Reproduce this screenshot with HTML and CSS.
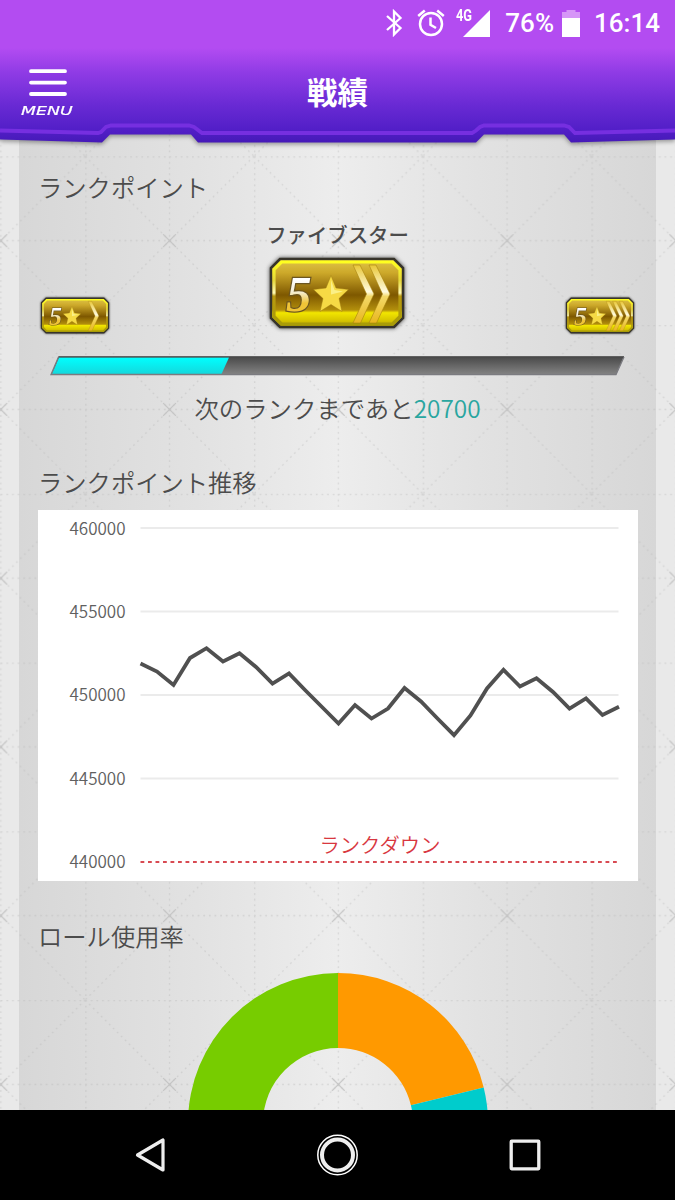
FILE: index.html
```html
<!DOCTYPE html>
<html lang="ja">
<head>
  <meta charset="UTF-8">
  <title>戦績</title>
  <meta name="viewport" content="width=device-width, initial-scale=1.0">
  <link rel="stylesheet" href="styles.css">
</head>
<body>

<!-- Shared badge artwork -->
<svg class="defs" width="0" height="0" aria-hidden="true">
  <defs>
    <linearGradient id="gold" x1="0" y1="0" x2="0" y2="1">
      <stop offset="0" stop-color="#e0c64a"/>
      <stop offset="0.2" stop-color="#cda92a"/>
      <stop offset="0.53" stop-color="#7e5800"/>
      <stop offset="0.75" stop-color="#b38f0c"/>
      <stop offset="0.79" stop-color="#f2e600"/>
      <stop offset="0.9" stop-color="#d8c600"/>
      <stop offset="1" stop-color="#b5a000"/>
    </linearGradient>
    <linearGradient id="rim" x1="0" y1="0" x2="0" y2="1">
      <stop offset="0" stop-color="#ffff20"/>
      <stop offset="0.3" stop-color="#e5d83c"/>
      <stop offset="0.5" stop-color="#fffbb5"/>
      <stop offset="0.55" stop-color="#b99a10"/>
      <stop offset="1" stop-color="#a99c08"/>
    </linearGradient>
    <linearGradient id="shine" gradientUnits="userSpaceOnUse" x1="0" y1="6" x2="0" y2="64">
      <stop offset="0" stop-color="#e8c531"/>
      <stop offset="0.48" stop-color="#fffbe0"/>
      <stop offset="0.56" stop-color="#f3d868"/>
      <stop offset="1" stop-color="#e9b820"/>
    </linearGradient>
    <linearGradient id="five" gradientUnits="userSpaceOnUse" x1="0" y1="18" x2="0" y2="54">
      <stop offset="0.1" stop-color="#ffffff"/>
      <stop offset="0.45" stop-color="#f5eed2"/>
      <stop offset="0.75" stop-color="#f0c437"/>
    </linearGradient>
    <g id="badge">
      <path class="badge-body" d="M10 1H124L133 10V60L124 69H10L1 60V10Z" fill="url(#gold)"/>
      <path d="M11.500 4H122.500L130 11.500V58.500L122.500 66H11.500L4 58.500V11.500Z" fill="none" stroke="url(#rim)" stroke-width="3.200"/>
      <text class="badge-number" x="16" y="53" fill="url(#five)">5</text>
      <path d="M61 17.500L66 30L78.500 31.500L69 40.500L72 53.500L61 46.500L50 53.500L53 40.500L43.500 31.500L56 30Z" fill="#f6da45" stroke="#a07c10" stroke-opacity="0.600" stroke-width="0.800" stroke-linejoin="round"/>
      <path d="M61 22L64.500 32L73 33.500L61 36.500Z" fill="#fbf087"/>
    </g>
    <path id="chevron" d="M0 7H7L21 36L7.500 65H0L13.500 36Z" fill="url(#shine)" stroke="#a8830f" stroke-width="0.600"/>
    <pattern id="mesh" width="168.750" height="168.750" patternUnits="userSpaceOnUse" patternTransform="translate(85.200 22.300)">
      <g fill="none" stroke="#b4b4b4" stroke-width="1.300" stroke-dasharray="1.800 3.823" opacity="0.380">
        <path d="M0 84.375H168.750M84.375 0V168.750M0 0.700H168.750M0.700 0V168.750M0 0L168.750 168.750M168.750 0L0 168.750"/>
      </g>
      <path d="M78 78L90.700 90.700M90.700 78L78 90.700" stroke="#c2c2c2" stroke-width="1.200"/>
    </pattern>
  </defs>
</svg>

<div class="screen">

<header class="header">
  <svg class="header-bg" width="675" height="152" viewBox="0 0 675 152">
    <defs>
      <linearGradient id="purple" gradientUnits="userSpaceOnUse" x1="0" y1="48" x2="0" y2="143">
        <stop offset="0" stop-color="#b34cf1"/>
        <stop offset="0.260" stop-color="#8f3be5"/>
        <stop offset="0.600" stop-color="#692ad4"/>
        <stop offset="0.850" stop-color="#531fc8"/>
        <stop offset="1" stop-color="#4519b7"/>
      </linearGradient>
    </defs>
    <path class="header-shape" d="M0 0H675V139.500L571 142.500L564 134.500H484L476 142.500H198L191 134.500H110L102 142.500L0 139.500Z" fill="url(#purple)"/>
    <path d="M0 130.500L98 133L101 132L106 127L111 125.500H189L194 127L202 133H472L476 130.500L480 127L484 125.500H564L569 127L575 133L675 130.500" fill="none" stroke="#762fe0" stroke-width="3.800"/>
  </svg>

  <div class="status-bar">
    <svg class="icon-bluetooth" width="18" height="28" viewBox="0 0 18 28">
      <path d="M2 7L15.500 19L9 25.500V2.500L15.500 9L2 21" fill="none" stroke="#fff" stroke-width="2.300"/>
    </svg>
    <svg class="icon-alarm" width="28" height="28" viewBox="0 0 28 28" fill="none" stroke="#fff" stroke-width="2.500">
      <circle cx="14" cy="15" r="11"/>
      <path d="M1.200 7L7.800 1.500M20.200 1.500L26.800 7M13.500 8.500V15.800L19 19"/>
    </svg>
    <div class="signal">
      <span class="signal-label">4G</span>
      <svg width="28" height="28" viewBox="0 0 28 28"><path d="M28 1V28H1Z" fill="#fff"/></svg>
    </div>
    <span class="battery-text">76%</span>
    <svg class="icon-battery" width="18" height="28" viewBox="0 0 18 28">
      <path d="M4.500 1H13.500V3H18V9H0V3H4.500Z" fill="#d696f7"/>
      <path d="M0 9H18V28H0Z" fill="#fff"/>
    </svg>
    <span class="clock">16:14</span>
  </div>

  <div class="title-bar">
    <div class="menu">
      <svg width="38" height="28" viewBox="0 0 38 28"><path d="M2 2.200H36M2 13.600H36M2 25H36" stroke="#fff" stroke-width="3.800" stroke-linecap="round"/></svg>
      <span class="menu-label">MENU</span>
    </div>
    <h1>戦績</h1>
  </div>
</header>

<main class="content">
  <svg class="mesh" width="675" height="976"><rect width="675" height="976" fill="url(#mesh)"/></svg>

  <div class="panel">
    <h2>ランクポイント</h2>

    <div class="rank">
      <svg class="badge-small" viewBox="0 0 134 70">
        <use href="#badge"/><use href="#chevron" x="93"/>
      </svg>
      <div class="rank-current">
        <p class="rank-name">ファイブスター</p>
        <svg class="badge-large" viewBox="0 0 134 70">
          <use href="#badge"/><use href="#chevron" x="83"/><use href="#chevron" x="99"/>
        </svg>
      </div>
      <svg class="badge-small" viewBox="0 0 134 70">
        <use href="#badge"/><use href="#chevron" x="79"/><use href="#chevron" x="92"/><use href="#chevron" x="105"/>
      </svg>
    </div>

    <svg class="progress" width="576" height="20" viewBox="0 0 576 20">
      <defs>
        <linearGradient id="track" x1="0" y1="0" x2="0" y2="1">
          <stop offset="0" stop-color="#484848"/><stop offset="1" stop-color="#858585"/>
        </linearGradient>
        <linearGradient id="fill" x1="0" y1="0" x2="0" y2="1">
          <stop offset="0" stop-color="#00ffff"/><stop offset="1" stop-color="#14d8dc"/>
        </linearGradient>
      </defs>
      <path d="M8.500 0.500H574L566 19H1Z" fill="url(#track)"/>
      <path d="M9 1.500H179L171.500 18H2Z" fill="url(#fill)"/>
      <path d="M574 1L566 18.500H1L8.500 1" fill="none" stroke="#7b7b80" stroke-width="1.300"/>
      <path d="M8.500 0.800H574" stroke="#4b4b4b"/>
    </svg>
    <p class="next-rank">次のランクまであと<span class="points">20700</span></p>

    <h2 class="history-title">ランクポイント推移</h2>
    <svg class="chart" width="600" height="371" viewBox="0 0 600 371">
      <g class="grid">
        <path d="M102.500 18H580.500M102.500 101.500H580.500M102.500 185H580.500M102.500 268.500H580.500"/>
      </g>
      <g class="axis">
        <text x="87.500" y="24.500">460000</text>
        <text x="87.500" y="107.800">455000</text>
        <text x="87.500" y="191.200">450000</text>
        <text x="87.500" y="274.500">445000</text>
        <text x="87.500" y="358">440000</text>
      </g>
      <path class="down-line" d="M102.500 352H580.500"/>
      <text class="down-label" x="342" y="342.500">ランクダウン</text>
      <polyline class="line" points="102.500,153.500 119,161.500 135.500,175 152,148 168.500,138.200 185,151.500 201.500,143.200 218,157 234.500,173.500 251,163.500 267.500,180.500 284,197 300.500,213.500 317,195 333.500,208.500 350,198.500 366.500,178 383,191.500 399.500,208.500 416,225.200 432.500,205.500 449,178.500 465.500,159.800 482,176.500 498.500,168.200 515,182 531.500,198.500 548,188.500 564.500,205 581,196.700"/>
    </svg>

    <h2 class="role-title">ロール使用率</h2>
    <svg class="donut" width="300" height="300" viewBox="0 0 300 300">
      <path d="M150 0A150 150 0 0 1 295.700 114.400L222.900 132.200A75 75 0 0 0 150 75Z" fill="#ff9900"/>
      <path d="M295.700 114.400A150 150 0 0 1 150 300V225A75 75 0 0 0 222.900 132.200Z" fill="#00cccc"/>
      <path d="M150 300A150 150 0 0 1 150 0V75A75 75 0 0 0 150 225Z" fill="#77cc00"/>
    </svg>
  </div>
</main>

<nav class="nav-bar">
  <svg width="40" height="44" viewBox="0 0 40 44"><path d="M6.500 22L32 7V37Z" fill="none" stroke="#eee" stroke-width="3.200" stroke-linejoin="round"/></svg>
  <svg width="44" height="44" viewBox="0 0 44 44" fill="none" stroke="#eee">
    <circle cx="21.500" cy="22" r="19.700" stroke="#fff" stroke-width="1.500"/>
    <circle cx="21.500" cy="22" r="15.500" stroke-width="4"/>
  </svg>
  <svg width="40" height="44" viewBox="0 0 40 44"><rect x="6.200" y="8.200" width="27.600" height="27.600" rx="0.500" fill="none" stroke="#eee" stroke-width="3.300" stroke-linejoin="round"/></svg>
</nav>

</div>
</body>
</html>
```
FILE: styles.css
```css
* {
  box-sizing: border-box;
}
body {
  margin: 0;
  font-family: "Noto Sans CJK JP", sans-serif;
  font-weight: 350; /* DemiLight */
  color: #4c4c4c;
  background: #e9e9e9;
}
h1, h2, p {
  margin: 0;
}
svg {
  display: block;
  flex: none;
}
.defs {
  position: absolute;
}
.screen {
  width: 675px;
  height: 1200px;
  display: flex;
  flex-direction: column;
  overflow: hidden;
}

/* Header */
.header {
  position: relative;
  z-index: 1;
  height: 134px;
  flex: none;
  color: #fff;
}
.header-bg {
  position: absolute; /* notched edge hangs over the content */
  top: 0;
  left: 0;
  z-index: -1;
}
.header-shape {
  filter: drop-shadow(0 2px 2px rgba(0,0,0,0.35));
}
.status-bar {
  height: 48px;
  padding: 0 15px 2px 0;
  display: flex;
  justify-content: flex-end;
  align-items: center;
  font-family: Roboto, sans-serif;
  font-size: 26px;
  font-weight: 500;
}
.icon-alarm {
  margin-left: 14px;
}
.signal {
  display: flex;
  align-items: flex-start;
  margin-left: 10px;
}
.signal-label {
  width: 17px;
  margin: 0 -11px 0 1px;
  font-size: 16px;
  font-weight: 700;
  line-height: 14px;
  transform: scaleX(0.8);
  transform-origin: left;
}
.battery-text {
  margin-left: 15px;
}
.icon-battery {
  margin-left: 8px;
}
.clock {
  margin-left: 14px;
}
.title-bar {
  height: 86px;
  display: grid;
  grid-template-columns: 96px 1fr 96px;
}
.menu {
  padding-top: 21px;
  display: flex;
  flex-direction: column;
  align-items: center;
}
.menu-label {
  margin-top: 7px;
  margin-right: 2px;
  font: italic 12px/14px "DejaVu Sans", sans-serif;
  -webkit-text-stroke: 0.2px #fff;
  transform: scaleX(1.45);
}
h1 {
  padding-top: 21px;
  font-size: 30.4px;
  line-height: 44px;
  text-align: center;
}

/* Content */
.content {
  position: relative;
  flex: 1;
  min-height: 0;
  overflow: hidden;
  padding: 0 19px;
}
.mesh {
  position: absolute; /* dotted texture over the panel colour */
  top: 0;
  left: 0;
}
.panel {
  height: 1100px;
  padding: 35px 19px 0;
  background: linear-gradient(to right, #d7d7d7, #e2e2e2 28%, #ededed 50%, #e2e2e2 72%, #d7d7d7);
}
.panel > * {
  position: relative;
}
h2 {
  font-size: 24.3px;
  font-weight: 350;
  line-height: 36px;
}
.rank {
  height: 129px;
  padding: 0 3px;
  display: flex;
  justify-content: space-between;
  align-items: flex-end;
}
.rank-current {
  height: 112px;
}
.rank-name {
  font-size: 20.4px;
  font-weight: 500;
  line-height: 24px;
  text-align: center;
}
.badge-body {
  stroke: #37342b;
  stroke-width: 2.6px;
}
.badge-small {
  width: 68px;
  height: 37px;
  overflow: visible;
  filter: drop-shadow(0 0 1px rgba(0,0,0,0.7));
}
.badge-large {
  width: 134px;
  height: 70px;
  margin: 12px auto 0;
  overflow: visible;
  filter: drop-shadow(0 0 2px rgba(0,0,0,0.7));
}
.badge-number {
  font: italic bold 51px "Liberation Serif", serif;
  stroke: #6c5620;
  stroke-width: 2.4px;
  paint-order: stroke;
}
.progress {
  margin: 22px 0 0 12px;
}
.next-rank {
  margin-top: 14px;
  font-size: 24.4px;
  line-height: 36px;
  text-align: center;
}
.points {
  color: #2aa6a0;
}

/* Rank point history */
.history-title {
  margin-top: 38px;
}
.chart {
  margin: 10px 0 0 -0.5px;
  background: #fff;
}
.grid {
  stroke: #ebebeb;
  stroke-width: 2px;
}
.axis {
  fill: #606060;
  font-size: 17px;
  text-anchor: end;
}
.line {
  fill: none;
  stroke: #505050;
  stroke-width: 3.8px;
}
.down-line {
  stroke: #d84a52;
  stroke-width: 2px;
  stroke-dasharray: 3.8 3.7;
}
.down-label {
  fill: #d8373f;
  font-size: 20.3px;
  text-anchor: middle;
}

/* Role usage */
.role-title {
  margin-top: 37px;
}
.donut {
  margin: 19px auto 0;
}

/* Android navigation */
.nav-bar {
  height: 90px;
  flex: none;
  display: flex;
  justify-content: center;
  align-items: center;
  gap: 145px;
  background: #000;
}
```
